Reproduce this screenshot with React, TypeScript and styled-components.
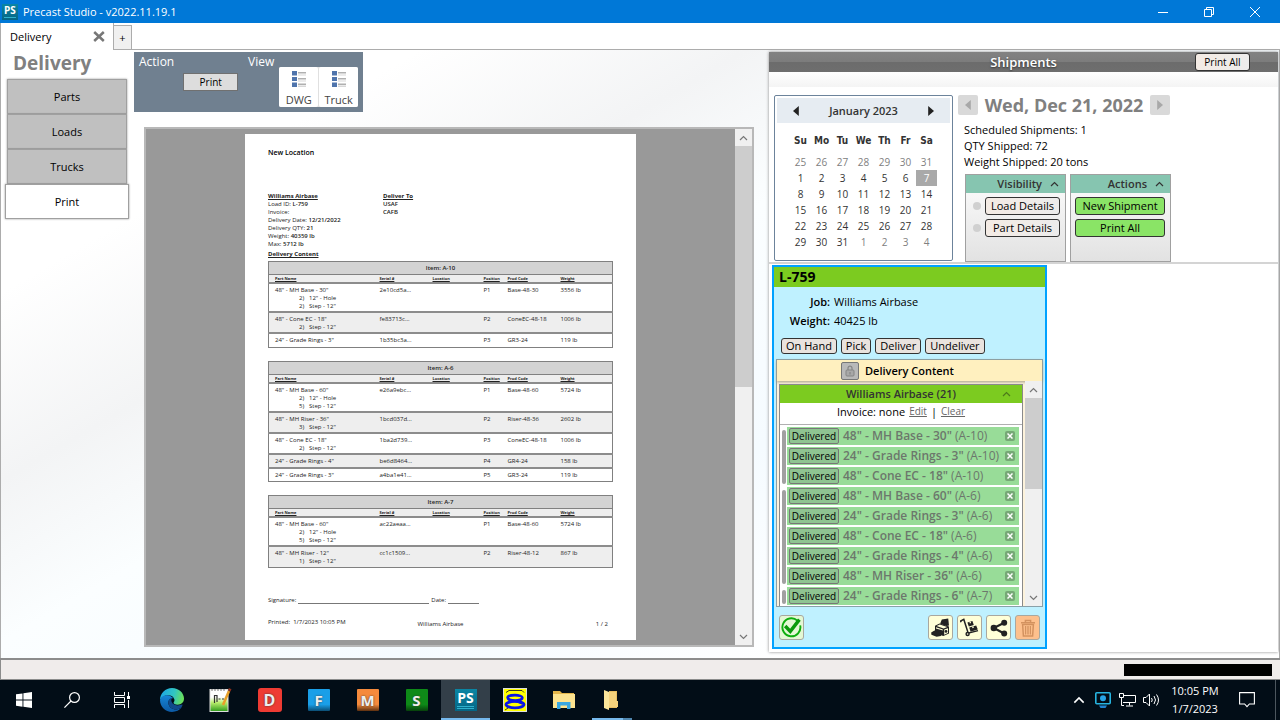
import React from "react";
import styled, { createGlobalStyle, css } from "styled-components";

const GlobalStyle = createGlobalStyle`
  *, *::before, *::after { box-sizing: border-box; }
  body {
    margin: 0;
    font-family: "Open Sans", "Noto Sans", sans-serif;
    font-size: 11px;
    line-height: 16px;
    color: #000;
    background: #fff;
  }
  button { font: inherit; color: inherit; padding: 0; cursor: pointer; }
  h1, h2, h3, p, dl, dd, ul { margin: 0; padding: 0; font: inherit; }
  ul { list-style: none; }
  svg { display: block; }
`;

/* ---------- window frame ---------- */

const Window = styled.div`
  display: flex;
  flex-direction: column;
  min-height: 100vh;
`;

const TitleBar = styled.header`
  display: flex;
  align-items: center;
  height: 23px;
  padding: 0 2px;
  background: #0078d7;
  color: #fff;
`;

const WindowTitle = styled.h1`
  flex: 1;
  padding-left: 5px;
`;

const WindowButton = styled.button`
  display: grid;
  place-items: center;
  width: 46px;
  height: 23px;
  border: 0;
  background: none;
`;

const TabStrip = styled.nav`
  display: flex;
  align-items: flex-end;
  height: 27px;
  border-bottom: 1px solid #acacac;
  border-left: 1px solid #acacac;
`;

const Tab = styled.div`
  display: flex;
  align-items: center;
  justify-content: space-between;
  width: 113px;
  height: 27px;
  margin-bottom: -1px;
  padding: 0 8px 0 9px;
  border-right: 1px solid #acacac;
  background: #fff;
`;

const TabLabel = styled.button`
  border: 0;
  background: none;
`;

const CloseTab = styled.button`
  border: 0;
  background: none;
`;

const AddTab = styled.button`
  width: 18px;
  height: 24px;
  border: 1px solid #acacac;
  border-left: 0;
  border-bottom: 0;
  background: #f0f0f0;
`;

const Main = styled.main`
  flex: 1;
  display: grid;
  grid-template-columns: 133px minmax(0, 1fr) 510px;
  padding: 2px 1px 6px 0;
  border-left: 1px solid #acacac;
  border-right: 1px solid #acacac;
  background: linear-gradient(150deg, #ffffff 0%, #ffffff 18%, #f3f4f5 32%, #fbfeff 44%, #f5fbff 62%, #ffffff 80%);
`;

/* ---------- left navigation ---------- */

const Sidebar = styled.aside`
  padding: 0 5px 0 4px;
`;

const SidebarTitle = styled.h2`
  padding-left: 8px;
  font-size: 19px;
  font-weight: 700;
  line-height: 23px;
  color: #808080;
  margin-bottom: 4px;
`;

const NavButton = styled.button<{ $active?: boolean }>`
  display: block;
  width: ${(p) => (p.$active ? "124px" : "120px")};
  height: 35px;
  margin-left: ${(p) => (p.$active ? "0" : "2px")};
  border: 1px solid #a0a0a0;
  background: ${(p) => (p.$active ? "#fff" : "#c0c0c0")};
  box-shadow: 0 0 2px #999;
`;

/* ---------- centre ---------- */

const Center = styled.section`
  display: flex;
  flex-direction: column;
  padding-bottom: 5px;
`;

const Toolbar = styled.div`
  display: flex;
  align-self: flex-start;
  width: 229px;
  height: 60px;
  padding: 2px 5px;
  background: #708090;
  color: #fff;
  font-size: 12px;
`;

const ToolGroup = styled.div`
  display: flex;
  width: 109px;
  &:first-child { gap: 9px; }
  &:last-child { gap: 5px; }
`;

const ToolPrint = styled.button`
  width: 55px;
  height: 18px;
  margin-top: 19px;
  border: 1px solid #707070;
  background: #dddddd;
  color: #000;
  font-size: 10px;
  line-height: 16px;
`;

const ViewSwitch = styled.div`
  display: flex;
  gap: 1px;
  height: 40px;
  margin-top: 13px;
  background: #e0e0e0;
  border-radius: 2px;
`;

const ViewButton = styled.button`
  display: flex;
  flex-direction: column;
  align-items: center;
  justify-content: space-between;
  width: 39px;
  height: 40px;
  padding: 4px 0 0;
  border: 0;
  border-radius: 2px;
  background: #fff;
  color: #444;
  font-size: 11px;
  line-height: 14px;
`;

const Viewer = styled.div`
  flex: 1;
  display: flex;
  margin: 15px 14px 0 10px;
  border: 2px solid #b8b8b8;
  background: #999999;
`;

const ViewerStage = styled.div`
  flex: 1;
  display: flex;
  justify-content: center;
  align-items: flex-start;
  padding: 5px 0;
`;

const ScrollTrack = styled.div`
  display: flex;
  flex-direction: column;
  justify-content: space-between;
  width: 17px;
  background: #f0f0f0;
`;

const ScrollButton = styled.button`
  display: grid;
  place-items: center;
  width: 17px;
  height: 17px;
  border: 0;
  background: #f0f0f0;
`;

const ScrollThumb = styled.div<{ $size: number }>`
  height: ${(p) => p.$size}px;
  margin-bottom: auto;
  background: #cdcdcd;
`;

/* ---------- printed report ---------- */

const Report = styled.article`
  display: flex;
  flex-direction: column;
  width: 391px;
  min-height: 506px;
  padding: 14px 23px 8px;
  background: #fff;
  color: #222;
  font-size: 6px;
  line-height: 8px;
  b { font-weight: 600; }
`;

const ReportHead = styled.h2`
  font-size: 7px;
  font-weight: 600;
  line-height: 10px;
  margin-bottom: 34px;
  color: #000;
`;

const ReportColumns = styled.div`
  display: grid;
  grid-template-columns: 115px 1fr;
  margin-bottom: 2px;
`;

const ReportHeading = styled.h3`
  font-size: 6px;
  font-weight: 700;
  text-decoration: underline;
`;

const ReportTable = styled.table`
  width: 100%;
  margin: 3px 0 10px;
  border-collapse: collapse;
  table-layout: fixed;
  border: 1px solid #808080;

  th, td { padding: 2px 0 1px 6px; text-align: left; vertical-align: top; white-space: nowrap; }
  thead tr { border-bottom: 1px solid #808080; }
  thead th { background: #eeeeee; font-size: 4px; font-weight: 700; line-height: 6px; text-decoration: underline; padding: 1px 0 0 6px; }
  thead th[colspan] { background: #d3d3d3; font-size: 6px; font-weight: 600; line-height: 10px; text-align: center; text-decoration: none; padding: 1px 0; }
  tbody tr { border-top: 2px solid #8c8c8c; }
  tbody tr:nth-child(even) { background: #eeeeee; }
`;

const ReportRow = styled.tr<{ $lines: number }>`
  height: ${(p) => p.$lines * 7 + 7}px;
`;

const SubParts = styled.ul`
  padding-left: 24px;
  li { display: flex; }
  li span { width: 10px; }
`;

const Signature = styled.p`
  display: flex;
  gap: 2px;
  margin: 18px 0 14px;
`;

const Rule = styled.span<{ $width: number }>`
  width: ${(p) => p.$width}px;
  border-bottom: 1px solid #777;
`;

const ReportFooter = styled.footer`
  display: grid;
  grid-template-columns: 1fr 1fr 1fr;
  span:nth-child(2) { text-align: center; padding-top: 2px; }
  span:nth-child(3) { text-align: right; padding: 2px 5px 0 0; }
`;

/* ---------- shipments ---------- */

const Shipments = styled.section`
  display: flex;
  flex-direction: column;
  margin-left: 1px;
  background: #fff;
  box-shadow: 0 0 3px #888;
`;

const ShipmentsBar = styled.div`
  display: grid;
  grid-template-columns: 1fr auto 1fr;
  align-items: center;
  height: 20px;
  padding: 0 28px;
  background: linear-gradient(#828282 0%, #7c7c7c 50%, #6c6c6c 51%, #6e6e6e 100%);
`;

const ShipmentsTitle = styled.h2`
  grid-column: 2;
  font-size: 13px;
  font-weight: 600;
  color: #fff;
  text-shadow: 0 1px 2px #333;
`;

const PillButton = styled.button<{ $tone?: "green" | "plain"; $small?: boolean }>`
  height: 18px;
  padding: 0 5px;
  border: 1px solid #333;
  border-radius: 3px;
  background: ${(p) => (p.$tone === "green" ? "#8ae466" : "linear-gradient(100deg, #f4ebe4, #ececec)")};
  font-size: ${(p) => (p.$small ? "10px" : "11px")};
  line-height: 16px;
  white-space: nowrap;
`;

const PrintAllTop = styled(PillButton)`
  justify-self: end;
  width: 55px;
`;

const DayArea = styled.div`
  display: flex;
  gap: 5px;
  padding: 23px 0 0 5px;
  background: linear-gradient(#fff 0, #f4f4f4 15px, #fff 15px);
  border-bottom: 2px solid #d4d4d4;
`;

const Calendar = styled.div`
  align-self: flex-start;
  width: 179px;
  padding: 2px;
  border: 1px solid #6c839b;
  border-radius: 2px;
  background: #fff;
`;

const CalendarHead = styled.div`
  display: flex;
  align-items: center;
  justify-content: space-between;
  height: 25px;
  padding: 0 14px;
  background: #e6ecf2;
  font-weight: 600;
  color: #333;
`;

const CalendarStep = styled.button`
  display: grid;
  place-items: center;
  width: 10px;
  height: 16px;
  border: 0;
  background: none;
`;

const Days = styled.table`
  margin: 0 auto 8px;
  border-collapse: collapse;
  table-layout: fixed;
  width: 147px;
  font-size: 10px;
  line-height: 16px;
  text-align: center;
  color: #333;
  th { height: 31px; padding: 4px 0 0; font: bold 10px/16px "DejaVu Sans Condensed", "DejaVu Sans", sans-serif; }
  td { height: 16px; padding: 0; }
`;

const Day = styled.td<{ $other?: boolean; $today?: boolean }>`
  ${(p) => p.$other && css`color: #808080;`}
  ${(p) => p.$today && css`background: #a9a9a9; color: #fff;`}
`;

const DaySummary = styled.div`
  width: 213px;
`;

const DateRow = styled.div`
  display: flex;
  align-items: center;
  justify-content: space-between;
  width: 212px;
  height: 20px;
  margin-bottom: 7px;
`;

const DateTitle = styled.h3`
  font-size: 18px;
  font-weight: 700;
  line-height: 20px;
  color: #808080;
`;

const DateStep = styled.button`
  display: grid;
  place-items: center;
  width: 20px;
  height: 20px;
  border: 0;
  border-radius: 2px;
  background: #d9d9d9;
`;

const SummaryText = styled.p`
  padding-left: 6px;
`;

const OptionPanels = styled.div`
  display: flex;
  gap: 4px;
  padding: 4px 0 0 7px;
`;

const OptionPanel = styled.section`
  width: 101px;
  height: 88px;
  border: 1px solid #a0a0a0;
  background: linear-gradient(#fdfdfd, #e2e2e2);
`;

const OptionHead = styled.h3`
  display: flex;
  align-items: center;
  justify-content: flex-end;
  gap: 8px;
  height: 18px;
  padding-right: 6px;
  background: #86c5b0;
  color: #333;
  font-weight: 600;
`;

const OptionRow = styled.div`
  display: flex;
  align-items: center;
  gap: 4px;
  margin: 4px 5px 0 4px;
  ${PillButton} { flex: 1; padding: 0; }
`;

const Dot = styled.span`
  width: 8px;
  height: 8px;
  margin-left: 3px;
  border-radius: 50%;
  background: #d0d0d0;
`;

/* ---------- load card ---------- */

const LoadCard = styled.article`
  width: 275px;
  margin: 1px 0 3px 3px;
  border: 2px solid #00a2ff;
  background: #bff1ff;
`;

const LoadTitle = styled.h3`
  height: 20px;
  padding-left: 5px;
  background: #7ccb20;
  font-size: 14px;
  font-weight: 700;
  line-height: 20px;
`;

const LoadFacts = styled.dl`
  display: grid;
  grid-template-columns: 56px 1fr;
  gap: 3px 4px;
  padding: 7px 0 9px;
  dt { font-weight: 600; text-align: right; }
`;

const LoadActions = styled.div`
  display: flex;
  gap: 4px;
  padding-left: 7px;
  ${PillButton} { height: 16px; padding: 0 4px; line-height: 14px; background: #e9e3de; }
`;

const ContentBox = styled.section`
  margin: 5px 2px 0;
  border: 1px solid #8aa0a8;
  background: #fdf3dc;
`;

const ContentHead = styled.h4`
  display: flex;
  align-items: center;
  justify-content: center;
  gap: 6px;
  height: 21px;
  margin: 0;
  padding-right: 24px;
  background: #fff0bf;
  box-shadow: 0 1px 3px #a09a80;
  font-size: 11px;
  font-weight: 600;
`;

const LockButton = styled.button`
  display: grid;
  place-items: center;
  width: 18px;
  height: 18px;
  border: 1px solid #777;
  border-radius: 2px;
  background: #b9b9b9;
`;

const ContentScroll = styled.div`
  display: flex;
  justify-content: space-between;
  height: 225px;
  padding-left: 2px;
`;

const Stop = styled.div`
  width: 244px;
  height: 222px;
  margin-top: 3px;
  overflow: hidden;
  border: 1px solid #8a8a8a;
  border-bottom: 0;
  background: #fff;
`;

const StopHead = styled.div`
  display: grid;
  grid-template-columns: 32px 1fr 32px;
  align-items: center;
  justify-items: center;
  height: 18px;
  background: #7ccb20;
  color: #333;
  font-weight: 600;
`;

const Invoice = styled.p`
  display: flex;
  justify-content: center;
  gap: 4px;
  height: 21px;
  line-height: 18px;
  a { color: #666; font-size: 10px; line-height: 16px; }
`;

const PartList = styled.div`
  padding: 2px 3px 0 2px;
  border-top: 1px solid #b0b0b0;
`;

const PartGroup = styled.div`
  display: flex;
  gap: 1px;
`;

const GroupBar = styled.span`
  width: 4px;
  margin: 3px 0 3px;
  border-radius: 2px;
  background: #a0a0a0;
`;

const PartRows = styled.ul`
  flex: 1;
`;

const PartRow = styled.li`
  display: flex;
  align-items: center;
  height: 18px;
  margin-bottom: 2px;
  padding: 0 4px 0 2px;
  background: #98dc98;
  color: #6c776c;
  font-size: 12px;
  white-space: nowrap;
  b { font-weight: 600; }
`;

const PartName = styled.span`
  flex: 1;
  padding-left: 4px;
`;

const StatusButton = styled.button`
  width: 50px;
  height: 16px;
  border: 1px solid #777;
  border-radius: 2px;
  background: #8fc491;
  color: #000;
  font-size: 10px;
  line-height: 14px;
`;

const RemoveButton = styled.button`
  display: grid;
  place-items: center;
  width: 10px;
  height: 10px;
  border: 0;
  border-radius: 2px;
  background: #76a876;
`;

const CardFooter = styled.footer`
  display: flex;
  gap: 4px;
  padding: 8px 5px 7px;
`;

const IconButton = styled.button<{ $bg?: string; $push?: boolean }>`
  display: grid;
  place-items: center;
  width: 25px;
  height: 25px;
  margin-right: ${(p) => (p.$push ? "auto" : "0")};
  border: 1px solid #a8a8a0;
  border-radius: 3px;
  background: ${(p) => p.$bg || "#ffffd8"};
`;

/* ---------- bottom bars ---------- */

const StatusBar = styled.div`
  display: flex;
  justify-content: flex-end;
  height: 22px;
  padding: 4px 8px 0 0;
  border-top: 2px solid #8c8c8c;
  border-bottom: 1px solid #8c8c8c;
  border-left: 1px solid #8c8c8c;
  background: #f0eceb;
`;

const Redacted = styled.div`
  width: 148px;
  height: 12px;
  background: #000;
`;

const Taskbar = styled.footer`
  display: flex;
  height: 40px;
  background: #020d17;
  color: #fff;
`;

const TaskButton = styled.button<{ $w?: number; $active?: boolean; $open?: boolean }>`
  display: grid;
  place-items: center;
  width: ${(p) => p.$w || 49}px;
  height: 40px;
  border: 0;
  border-bottom: 2px solid ${(p) => (p.$active ? "#76b9ed" : "transparent")};
  border-top: 2px solid transparent;
  background: ${(p) => (p.$active ? "#333f49" : "none")};
  ${(p) => p.$open && css`
    padding-right: 4px;
    background: linear-gradient(90deg, transparent 4px, #76b9ed 4px, #76b9ed 35px, #5087b0 35px, #5087b0 44px, transparent 44px) bottom / 100% 2px no-repeat border-box;
  `}
`;

const LetterIcon = styled.span<{ $bg: string; $w?: number; $size?: number }>`
  display: grid;
  place-items: center;
  width: ${(p) => p.$w || 22}px;
  height: ${(p) => p.$w || 22}px;
  border-radius: ${(p) => (p.$w ? 3 : 1)}px;
  background: ${(p) => p.$bg};
  color: #eee;
  font-size: ${(p) => p.$size || 15}px;
  font-weight: 700;
  line-height: 20px;
  text-shadow: 0 0 2px #333;
`;

const StudioIcon = styled.span<{ $size: number }>`
  display: flex;
  flex-direction: column;
  align-items: center;
  justify-content: space-between;
  width: ${(p) => p.$size}px;
  height: ${(p) => p.$size}px;
  padding-bottom: 2px;
  background: linear-gradient(#0b86a4, #056584);
  color: #fff;
  font-size: ${(p) => (p.$size > 16 ? 14 : 10)}px;
  font-weight: 700;
  line-height: ${(p) => (p.$size > 16 ? 17 : 12)}px;
  &::after {
    content: "";
    width: 80%;
    height: ${(p) => (p.$size > 16 ? 3 : 1)}px;
    border: solid #2fb0cc;
    border-width: 1px 0 ${(p) => (p.$size > 16 ? 1 : 0)}px;
  }
`;

const Tray = styled.div`
  display: flex;
  align-items: center;
  margin: 0 4px 0 auto;
  padding-right: 4px;
  border-right: 1px solid #4c565e;
`;

const TrayButton = styled.button`
  display: grid;
  place-items: center;
  width: 24px;
  height: 40px;
  border: 0;
  background: none;
`;

const Clock = styled.div`
  width: 60px;
  padding-left: 4px;
  text-align: center;
  line-height: 18px;
`;

const NoticeButton = styled(TrayButton)`
  width: 48px;
`;

/* ---------- icons ---------- */

const Chevron = ({ down, color = "#777", w = 9 }: { down?: boolean; color?: string; w?: number }) => (
  <svg width={w} height={(w * 2) / 3} viewBox="0 0 9 6" fill="none" stroke={color} strokeWidth="1.2" aria-hidden>
    <path d={down ? "M1 1l3.5 3.5L8 1" : "M1 5l3.5-3.5L8 5"} />
  </svg>
);

const Triangle = ({ right, color = "#222", size = 10 }: { right?: boolean; color?: string; size?: number }) => (
  <svg width={size} height={size} viewBox="0 0 10 10" fill={color} aria-hidden>
    <path d={right ? "M2.2 0v10L8 5z" : "M7.8 0v10L2 5z"} />
  </svg>
);

const ListIcon = () => (
  <svg width="14" height="16" viewBox="0 0 14 16" aria-hidden>
    <g fill="#4f74ac"><path d="M0 0h5v4.600H0zM0 6h5v4H0zM0 11.500h5v4.500H0z" /></g>
    <g fill="#b0b0b0"><path d="M6 1h8v1.600H6zM6 7h8v1.600H6zM6 12.600h8v1.600H6z" /></g>
    <g fill="#d8d8d8"><path d="M6 3.400h8v1H6zM6 9.400h8v1H6zM6 15h8v1H6z" /></g>
  </svg>
);

const LockIcon = () => (
  <svg width="10" height="12" viewBox="0 0 10 12" aria-hidden>
    <rect x="1" y="5" width="8" height="6" rx="1" fill="#a8a8a8" stroke="#858585" />
    <path d="M3 5V3.200a2 2 0 014 0V5" fill="none" stroke="#858585" strokeWidth="1.200" />
    <path d="M5 7v2.400" stroke="#858585" strokeWidth="1.200" />
  </svg>
);

const DoneIcon = () => (
  <svg width="21" height="21" viewBox="0 0 21 21" fill="none" aria-hidden>
    <path d="M16.400 3.600A9 9 0 1019.200 8.400" stroke="#0fae0f" strokeWidth="1.900" />
    <path d="M4.200 9l5.100 5.400L18.400 2.600" stroke="#0a9a0a" strokeWidth="3.400" />
  </svg>
);

const PackIcon = () => (
  <svg width="19" height="19" viewBox="0 0 19 19" aria-hidden>
    <path d="M9.400 5l1.400-3.600L17.200.4l.8 7-2.400.6-6.200-2z" fill="#222" />
    <path d="M4 7.800l4.600-2.200L18 8.600v7L12.400 18 4 15.400z" fill="#222" />
    <path d="M5.600 8l3.200-1.400 7.400 2.400-3.600 1.400z" fill="#ffffd8" />
    <path d="M13.200 11.600L17 10.200v4.800l-3.800 1.800z" fill="#ffffd8" />
    <circle cx="15" cy="13.400" r="1.400" fill="#222" />
    <path d="M5 9.200l6.800 2.200v1.200L5 10.400z" fill="#ffffd8" />
    <path d="M.2 14.600l3.200-2 4.400 1.400 2.800 2-.8 2-4.200.8-5.200-2z" fill="#222" />
  </svg>
);

const DollyIcon = () => (
  <svg width="19" height="19" viewBox="0 0 19 19" aria-hidden>
    <path d="M1 4.200L.6 3l3.200-1.600L8.200 15.200l9.800-2.600" fill="none" stroke="#222" strokeWidth="1.500" />
    <circle cx="7.600" cy="16" r="2.200" fill="#222" />
    <circle cx="7.600" cy="16" r=".8" fill="#ffffd8" />
    <path d="M7.400 4.600l5-1.600 1.400 4-5 1.600zM9.200 9.600l7-2.200 1.600 4.200-7.200 2.200z" fill="#222" />
    <path d="M9.400 4l.5 1.500 1.200-.4-.5-1.500zM12 8.700l.5 1.500 1.400-.4-.5-1.500z" fill="#ffffd8" />
  </svg>
);

const ShareIcon = () => (
  <svg width="18" height="18" viewBox="0 0 18 18" aria-hidden>
    <path d="M14.200 3.800L3.800 9l10.400 5.400" fill="none" stroke="#222" strokeWidth="2.200" />
    <g fill="#222"><circle cx="14.200" cy="3.800" r="3" /><circle cx="3.800" cy="9" r="3.200" /><circle cx="14.200" cy="14.400" r="3" /></g>
  </svg>
);

const TrashIcon = () => (
  <svg width="16" height="18" viewBox="0 0 16 18" fill="none" stroke="#d3925f" aria-hidden>
    <path d="M1 3.800h14M5.400 3.400V1.400h5.200v2" strokeWidth="1.500" />
    <path d="M2.600 5.400h10.800L12.600 17H3.400z" strokeWidth="1.500" />
    <path d="M5.600 7v8.400M8 7v8.400M10.400 7v8.400" strokeWidth="1.300" />
  </svg>
);

const EdgeIcon = () => (
  <svg width="24" height="24" viewBox="0 0 24 24" aria-hidden>
    <defs>
      <linearGradient id="edgeTop" x1="0" x2="1" y1=".2" y2=".4">
        <stop offset="0" stopColor="#1ba4e8" /><stop offset=".6" stopColor="#32c6c0" /><stop offset="1" stopColor="#6be05a" />
      </linearGradient>
      <linearGradient id="edgeLow" x1="0" x2="0" y1="0" y2="1">
        <stop offset="0" stopColor="#1686d8" /><stop offset="1" stopColor="#0c59a4" />
      </linearGradient>
    </defs>
    <path d="M12 0c7 0 12 5.200 12 10.600 0 4-3 6.200-6.200 6.200-3 0-4.600-1.200-4.200-2.200.8-1.200 1-2 .8-3.200-.6-2.600-3-4.200-6.400-4.200C4.400 7.200 1.600 9 0 12 .1 5 5.400 0 12 0z" fill="url(#edgeTop)" />
    <path d="M0 12c1-3.400 4-5 7-4.800 3 .2 5 1.400 6.400 3C10 9.800 8 12.400 8.400 15.400c.6 3.800 4.200 6.200 8.200 6 2.200-.2 4-1 5-1.800C19.600 22.400 16 24 12 24 5.400 24 0 18.600 0 12z" fill="url(#edgeLow)" />
    <path d="M8.400 15.400c-.4-3 1.400-5.400 4-5.600-1 .8-1.400 2.400-.8 4 1 2.800 4.600 4.400 8.400 3.200 1.400-.5 2.200-.8 2.400-.4.300.6-.2 1.800-1 2.800-1.400 1-3 1.800-4.800 2-4 .2-7.600-2.200-8.200-6z" fill="#114a8b" />
  </svg>
);

const NotepadIcon = () => (
  <svg width="23" height="24" viewBox="0 0 23 24" aria-hidden>
    <defs>
      <linearGradient id="pad" x1="0" x2="0" y1="0" y2="1">
        <stop offset=".35" stopColor="#fff" /><stop offset=".6" stopColor="#b8ee6c" /><stop offset="1" stopColor="#2c9a1a" />
      </linearGradient>
    </defs>
    <rect x="1" y="1.500" width="18" height="22" fill="url(#pad)" stroke="#ddd" />
    <path d="M3 1v2M6 1v2M9 1v2M12 1v2M15 1v2" stroke="#777" />
    <path d="M5.500 7v8M5 7.500h3V14M9.500 11h2M13 11h2" fill="none" stroke="#333" strokeWidth="1.200" />
    <path d="M20 3l-6 14" stroke="#e8a02a" strokeWidth="2.600" />
    <path d="M21.200.6l-1 2.200" stroke="#8d2f1c" strokeWidth="2.800" />
  </svg>
);

const ExplorerIcon = () => (
  <svg width="22" height="18" viewBox="0 0 22 18" aria-hidden>
    <path d="M0 0h7l2 2h12v3H0z" fill="#e5b64a" />
    <path d="M0 3h22v14H0z" fill="#fde38f" />
    <path d="M4 18v-7h13.500v7h-3.500v-3.500H7.500V18z" fill="#3aa7e0" />
  </svg>
);

const FolderIcon = () => (
  <svg width="14" height="20" viewBox="0 0 14 20" aria-hidden>
    <path d="M5 1h8v17H5z" fill="#e9bf62" />
    <path d="M0 0l5 2v18l-5-2z" fill="#fbe59a" />
    <path d="M5 2h7v9h2v6H5z" fill="#f5d27c" />
  </svg>
);

const SketchIcon = () => (
  <svg width="24" height="24" viewBox="0 0 24 24" aria-hidden>
    <rect x=".5" y=".5" width="23" height="23" fill="#ff0" stroke="#ddd" />
    <path d="M3 4.500l3-2h13l2 2M2 22l3-2" fill="none" stroke="#222" strokeWidth=".9" />
    <g fill="none" stroke="#0a14e6">
      <ellipse cx="12" cy="9.800" rx="7.400" ry="2.700" strokeWidth="2.600" />
      <ellipse cx="12" cy="16.600" rx="9" ry="3.200" strokeWidth="2.800" />
      <path d="M5 11c2 2.400 12 1.600 15 5" strokeWidth="2.400" />
    </g>
  </svg>
);

/* ---------- data ---------- */

type Part = { name: string; subs?: [number, string][]; serial: string; code: string; weight: string };

const items: { item: string; parts: Part[] }[] = [
  {
    item: "A-10",
    parts: [
      { name: '48" - MH Base - 30"', subs: [[2, '12" - Hole'], [2, 'Step - 12"']], serial: "2e10cd5a...", code: "Base-48-30", weight: "3556 lb" },
      { name: '48" - Cone EC - 18"', subs: [[2, 'Step - 12"']], serial: "fe83713c...", code: "ConeEC-48-18", weight: "1006 lb" },
      { name: '24" - Grade Rings - 3"', serial: "1b35bc3a...", code: "GR3-24", weight: "119 lb" },
    ],
  },
  {
    item: "A-6",
    parts: [
      { name: '48" - MH Base - 60"', subs: [[2, '12" - Hole'], [5, 'Step - 12"']], serial: "e26a9ebc...", code: "Base-48-60", weight: "5724 lb" },
      { name: '48" - MH Riser - 36"', subs: [[3, 'Step - 12"']], serial: "1bcd037d...", code: "Riser-48-36", weight: "2602 lb" },
      { name: '48" - Cone EC - 18"', subs: [[2, 'Step - 12"']], serial: "1ba2d739...", code: "ConeEC-48-18", weight: "1006 lb" },
      { name: '24" - Grade Rings - 4"', serial: "be6d8464...", code: "GR4-24", weight: "158 lb" },
      { name: '24" - Grade Rings - 3"', serial: "a4ba1e41...", code: "GR3-24", weight: "119 lb" },
    ],
  },
  {
    item: "A-7",
    parts: [
      { name: '48" - MH Base - 60"', subs: [[2, '12" - Hole'], [5, 'Step - 12"']], serial: "ac22aeaa...", code: "Base-48-60", weight: "5724 lb" },
      { name: '48" - MH Riser - 12"', subs: [[1, 'Step - 12"']], serial: "cc1c1509...", code: "Riser-48-12", weight: "867 lb" },
    ],
  },
];

const weeks = [
  [25, 26, 27, 28, 29, 30, 31],
  [1, 2, 3, 4, 5, 6, 7],
  [8, 9, 10, 11, 12, 13, 14],
  [15, 16, 17, 18, 19, 20, 21],
  [22, 23, 24, 25, 26, 27, 28],
  [29, 30, 31, 1, 2, 3, 4],
];

const groups: { item: string; parts: string[] }[] = [
  { item: "A-10", parts: ['48" - MH Base - 30"', '24" - Grade Rings - 3"', '48" - Cone EC - 18"'] },
  { item: "A-6", parts: ['48" - MH Base - 60"', '24" - Grade Rings - 3"', '48" - Cone EC - 18"', '24" - Grade Rings - 4"', '48" - MH Riser - 36"'] },
  { item: "A-7", parts: ['24" - Grade Rings - 6"'] },
];

const Scrollbar = ({ thumb }: { thumb: number }) => (
  <ScrollTrack>
    <ScrollButton aria-label="Scroll up"><Chevron /></ScrollButton>
    <ScrollThumb $size={thumb} />
    <ScrollButton aria-label="Scroll down"><Chevron down /></ScrollButton>
  </ScrollTrack>
);

const ItemTable = ({ item, parts }: { item: string; parts: Part[] }) => (
  <ReportTable>
    <colgroup>
      <col width={105} /><col width={53} /><col width={51} />
      <col width={24} /><col width={53} /><col />
    </colgroup>
    <thead>
      <tr><th colSpan={6}>Item: {item}</th></tr>
      <tr><th>Part Name</th><th>Serial #</th><th>Location</th><th>Position</th><th>Prod Code</th><th>Weight</th></tr>
    </thead>
    <tbody>
      {parts.map((p, i) => (
        <ReportRow key={p.serial} $lines={1 + (p.subs?.length ?? 0)}>
          <td>
            {p.name}
            {p.subs && (
              <SubParts>
                {p.subs.map(([n, label]) => <li key={label}><span>{n})</span>{label}</li>)}
              </SubParts>
            )}
          </td>
          <td>{p.serial}</td>
          <td />
          <td>P{i + 1}</td>
          <td>{p.code}</td>
          <td>{p.weight}</td>
        </ReportRow>
      ))}
    </tbody>
  </ReportTable>
);

export default function App() {
  return (
    <>
      <GlobalStyle />
      <Window>
        <TitleBar>
          <StudioIcon $size={16}>PS</StudioIcon>
          <WindowTitle>Precast Studio - v2022.11.19.1</WindowTitle>
          <WindowButton aria-label="Minimize">
            <svg width="10" height="10" viewBox="0 0 10 10" stroke="#fff"><path d="M0 5.500h10" /></svg>
          </WindowButton>
          <WindowButton aria-label="Restore">
            <svg width="10" height="10" viewBox="0 0 10 10" fill="none" stroke="#fff">
              <path d="M.5 2.500h7v7h-7zM2.500 2.500v-2h7v7h-2" />
            </svg>
          </WindowButton>
          <WindowButton aria-label="Close">
            <svg width="10" height="10" viewBox="0 0 10 10" stroke="#fff"><path d="M0 0l10 10M10 0L0 10" /></svg>
          </WindowButton>
        </TitleBar>

        <TabStrip>
          <Tab>
            <TabLabel>Delivery</TabLabel>
            <CloseTab aria-label="Close tab">
              <svg width="12" height="11" viewBox="0 0 12 11" stroke="#777" strokeWidth="2.500" aria-hidden>
                <path d="M1.200 1l9.600 9M10.800 1L1.200 10" />
              </svg>
            </CloseTab>
          </Tab>
          <AddTab aria-label="New tab">+</AddTab>
        </TabStrip>

        <Main>
          <Sidebar>
            <SidebarTitle>Delivery</SidebarTitle>
            <NavButton>Parts</NavButton>
            <NavButton>Loads</NavButton>
            <NavButton>Trucks</NavButton>
            <NavButton $active>Print</NavButton>
          </Sidebar>

          <Center>
            <Toolbar>
              <ToolGroup>
                <span>Action</span>
                <ToolPrint>Print</ToolPrint>
              </ToolGroup>
              <ToolGroup>
                <span>View</span>
                <ViewSwitch>
                  <ViewButton><ListIcon />DWG</ViewButton>
                  <ViewButton><ListIcon />Truck</ViewButton>
                </ViewSwitch>
              </ToolGroup>
            </Toolbar>
            <Viewer>
              <ViewerStage>
                <Report>
                  <ReportHead>New Location</ReportHead>
                  <ReportColumns>
                    <div>
                      <ReportHeading>Williams Airbase</ReportHeading>
                      <p>Load ID: <b>L-759</b></p>
                      <p>Invoice:</p>
                      <p>Delivery Date: <b>12/21/2022</b></p>
                      <p>Delivery QTY: <b>21</b></p>
                      <p>Weight: <b>40359 lb</b></p>
                      <p>Max: <b>5712 lb</b></p>
                    </div>
                    <div>
                      <ReportHeading>Deliver To</ReportHeading>
                      <p><b>USAF</b></p>
                      <p><b>CAFB</b></p>
                    </div>
                  </ReportColumns>
                  <ReportHeading>Delivery Content</ReportHeading>
                  {items.map((it) => <ItemTable key={it.item} {...it} />)}
                  <Signature>Signature: <Rule $width={131} /> Date: <Rule $width={31} /></Signature>
                  <ReportFooter>
                    <span>Printed:&nbsp; 1/7/2023 10:05 PM</span>
                    <span>Williams Airbase</span>
                    <span>1 / 2</span>
                  </ReportFooter>
                </Report>
              </ViewerStage>
              <Scrollbar thumb={241} />
            </Viewer>
          </Center>

          <Shipments>
            <ShipmentsBar>
              <ShipmentsTitle>Shipments</ShipmentsTitle>
              <PrintAllTop $small>Print All</PrintAllTop>
            </ShipmentsBar>
            <DayArea>
              <Calendar>
                <CalendarHead>
                  <CalendarStep aria-label="Previous month"><Triangle /></CalendarStep>
                  January 2023
                  <CalendarStep aria-label="Next month"><Triangle right /></CalendarStep>
                </CalendarHead>
                <Days>
                  <thead>
                    <tr>{["Su", "Mo", "Tu", "We", "Th", "Fr", "Sa"].map((d) => <th key={d}>{d}</th>)}</tr>
                  </thead>
                  <tbody>
                    {weeks.map((w, r) => (
                      <tr key={r}>
                        {w.map((d) => (
                          <Day key={d} $other={(r === 0 && d > 20) || (r === 5 && d < 20)} $today={r === 1 && d === 7}>{d}</Day>
                        ))}
                      </tr>
                    ))}
                  </tbody>
                </Days>
              </Calendar>
              <DaySummary>
                <DateRow>
                  <DateStep aria-label="Previous day"><Triangle color="#a8a8a8" /></DateStep>
                  <DateTitle>Wed, Dec 21, 2022</DateTitle>
                  <DateStep aria-label="Next day"><Triangle right color="#a8a8a8" /></DateStep>
                </DateRow>
                <SummaryText>Scheduled Shipments: 1</SummaryText>
                <SummaryText>QTY Shipped: 72</SummaryText>
                <SummaryText>Weight Shipped: 20 tons</SummaryText>
                <OptionPanels>
                  <OptionPanel>
                    <OptionHead>Visibility <Chevron color="#333" /></OptionHead>
                    <OptionRow><Dot /><PillButton>Load Details</PillButton></OptionRow>
                    <OptionRow><Dot /><PillButton>Part Details</PillButton></OptionRow>
                  </OptionPanel>
                  <OptionPanel>
                    <OptionHead>Actions <Chevron color="#333" /></OptionHead>
                    <OptionRow><PillButton $tone="green">New Shipment</PillButton></OptionRow>
                    <OptionRow><PillButton $tone="green">Print All</PillButton></OptionRow>
                  </OptionPanel>
                </OptionPanels>
              </DaySummary>
            </DayArea>

            <LoadCard>
              <LoadTitle>L-759</LoadTitle>
              <LoadFacts>
                <dt>Job:</dt><dd>Williams Airbase</dd>
                <dt>Weight:</dt><dd>40425 lb</dd>
              </LoadFacts>
              <LoadActions>
                <PillButton>On Hand</PillButton>
                <PillButton>Pick</PillButton>
                <PillButton>Deliver</PillButton>
                <PillButton>Undeliver</PillButton>
              </LoadActions>
              <ContentBox>
                <ContentHead>
                  <LockButton aria-label="Lock"><LockIcon /></LockButton>
                  Delivery Content
                </ContentHead>
                <ContentScroll>
                  <Stop>
                    <StopHead><span /><span>Williams Airbase (21)</span><Chevron color="#4d7a1a" /></StopHead>
                    <Invoice>Invoice: none <a href="#edit">Edit</a> | <a href="#clear">Clear</a></Invoice>
                    <PartList>
                      {groups.map((g) => (
                        <PartGroup key={g.item}>
                          <GroupBar />
                          <PartRows>
                            {g.parts.map((name) => (
                              <PartRow key={name}>
                                <StatusButton>Delivered</StatusButton>
                                <PartName><b>{name}</b> ({g.item})</PartName>
                                <RemoveButton aria-label="Remove">
                                  <svg width="6" height="6" viewBox="0 0 6 6" stroke="#fff" strokeWidth="1.500"><path d="M.5.5l5 5M5.500.5l-5 5" /></svg>
                                </RemoveButton>
                              </PartRow>
                            ))}
                          </PartRows>
                        </PartGroup>
                      ))}
                    </PartList>
                  </Stop>
                  <Scrollbar thumb={91} />
                </ContentScroll>
              </ContentBox>
              <CardFooter>
                <IconButton $push $bg="#e4f8d4" aria-label="Complete"><DoneIcon /></IconButton>
                <IconButton aria-label="Pack"><PackIcon /></IconButton>
                <IconButton aria-label="Move"><DollyIcon /></IconButton>
                <IconButton aria-label="Share"><ShareIcon /></IconButton>
                <IconButton $bg="#fdc08d" aria-label="Delete"><TrashIcon /></IconButton>
              </CardFooter>
            </LoadCard>
          </Shipments>
        </Main>

        <StatusBar><Redacted /></StatusBar>

        <Taskbar>
          <TaskButton $w={48} aria-label="Start">
            <svg width="16" height="16" viewBox="0 0 16 16" fill="#fff">
              <path d="M0 2.300L6.500 1.400v6.200H0zM7.400 1.300L16 0v7.600H7.400zM0 8.500h6.500v6.200L0 13.800zM7.400 8.500H16V16l-8.600-1.200z" />
            </svg>
          </TaskButton>
          <TaskButton $w={48} aria-label="Search">
            <svg width="16" height="16" viewBox="0 0 16 16" fill="none" stroke="#fff" strokeWidth="1.200">
              <circle cx="10.500" cy="5.500" r="4.900" /><path d="M7 9L.4 15.600" />
            </svg>
          </TaskButton>
          <TaskButton $w={51} aria-label="Task View">
            <svg width="16" height="16" viewBox="0 0 16 16" fill="none" stroke="#fff">
              <path d="M.5 0v3.500h10V0M.5 5.500h10v5H.5zM.5 16v-3.500h10V16M14.500 0v4M14.500 8v8" />
              <rect x="13.500" y="4.500" width="2" height="2" fill="#fff" />
            </svg>
          </TaskButton>
          <TaskButton aria-label="Browser"><EdgeIcon /></TaskButton>
          <TaskButton aria-label="Text editor"><NotepadIcon /></TaskButton>
          <TaskButton><LetterIcon $bg="#ee3b33" $w={24} $size={16}>D</LetterIcon></TaskButton>
          <TaskButton><LetterIcon $bg="linear-gradient(#1a9fe8 70%, #0b4d74)">F</LetterIcon></TaskButton>
          <TaskButton><LetterIcon $bg="linear-gradient(#f58a3c 70%, #5c3010)">M</LetterIcon></TaskButton>
          <TaskButton><LetterIcon $bg="linear-gradient(#0e8a18 70%, #07400b)">S</LetterIcon></TaskButton>
          <TaskButton $active><StudioIcon $size={22}>PS</StudioIcon></TaskButton>
          <TaskButton aria-label="Sketch"><SketchIcon /></TaskButton>
          <TaskButton aria-label="File Explorer"><ExplorerIcon /></TaskButton>
          <TaskButton $open aria-label="Folder"><FolderIcon /></TaskButton>

          <Tray>
            <TrayButton aria-label="Show hidden icons"><Chevron color="#fff" w={12} /></TrayButton>
            <TrayButton aria-label="Remote desktop">
              <svg width="16" height="16" viewBox="0 0 16 16" fill="none">
                <rect x=".8" y=".8" width="14.400" height="11" rx="1" stroke="#27b4e0" strokeWidth="1.600" />
                <circle cx="8" cy="6.300" r="3" fill="#27a4e6" /><path d="M4 13.500h8l-1.500 2.500h-5z" fill="#1f83d0" />
              </svg>
            </TrayButton>
            <TrayButton aria-label="Network">
              <svg width="17" height="14" viewBox="0 0 17 14" fill="none" stroke="#fff">
                <path d="M5 2.500h11.500v7H4M10.500 9.500v3M7 13h7M.5.500h4v4h-4zM2.500 4.500v8H5" />
              </svg>
            </TrayButton>
            <TrayButton aria-label="Volume">
              <svg width="17" height="14" viewBox="0 0 17 14" fill="none" stroke="#fff">
                <path d="M.5 4.500H3L6.500 1v12L3 9.500H.5zM8.500 5q1.500 2 0 4M11 3q3 4 0 8M13.500 1.500q4 5.500 0 11" />
              </svg>
            </TrayButton>
            <Clock>10:05 PM<br />1/7/2023</Clock>
            <NoticeButton aria-label="Notifications">
              <svg width="16" height="16" viewBox="0 0 16 16" fill="none" stroke="#fff" strokeWidth="1.100">
                <path d="M.6.6h14.800v11.400h-5L8 14.600 5.600 12h-5z" />
              </svg>
            </NoticeButton>
          </Tray>
        </Taskbar>
      </Window>
    </>
  );
}
